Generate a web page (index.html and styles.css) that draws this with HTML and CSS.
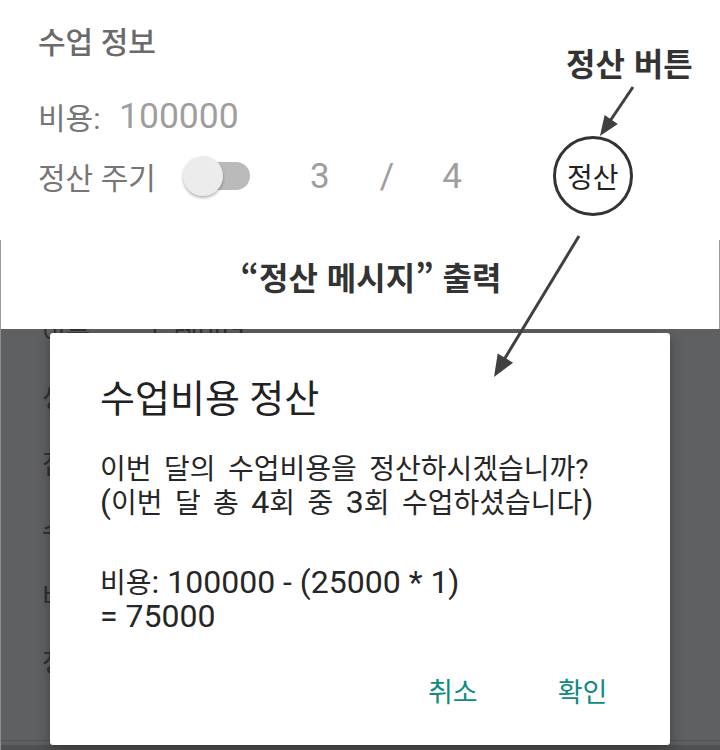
FILE: index.html
```html
<!DOCTYPE html>
<html lang="ko">
<head>
<meta charset="utf-8">
<title>수업 정산</title>
<link rel="stylesheet" href="styles.css">
</head>
<body>
<div class="page">
  <section class="info">
    <h2 class="info-title">수업 정보</h2>
    <div class="row cost-row">
      <span class="label cost-label">비용:</span>
      <span class="value">100000</span>
    </div>
    <div class="row cycle-row">
      <span class="label cycle-label">정산 주기</span>
      <span class="switch"><span class="track"></span><span class="thumb"></span></span>
      <span class="num num-done">3</span>
      <span class="num slash">/</span>
      <span class="num num-total">4</span>
      <button class="settle-btn">정산</button>
    </div>
  </section>

  <div class="band">
    <p class="caption">“정산 메시지” 출력</p>
  </div>

  <div class="dim">
    <ul class="bg-list">
      <li>이름<span class="bg-val">트레이너</span></li>
      <li>생년월일</li>
      <li>집 주소</li>
      <li>수업 정보</li>
      <li>비용</li>
      <li>정산 주기</li>
    </ul>
    <div class="bg-divider"></div>
    <div class="bg-bottom"></div>

    <div class="dialog">
      <h3 class="dialog-title">수업비용 정산</h3>
      <p class="dialog-text">이번 달의 수업비용을 정산하시겠습니까?<br><span class="n">(</span>이번 달 총 <span class="n">4</span>회 중 <span class="n">3</span>회 수업하셨습니다<span class="n">)</span></p>
      <p class="dialog-text calc">비용<span class="n">: 100000 - (25000 * 1)</span><br><span class="n">= 75000</span></p>
      <div class="dialog-actions">
        <button class="action">취소</button>
        <button class="action">확인</button>
      </div>
    </div>
  </div>

  <div class="note">정산 버튼</div>
  <svg class="arrows" width="720" height="750" viewBox="0 0 720 750">
    <line x1="633" y1="87" x2="608" y2="124" stroke="#404040" stroke-width="3"/>
    <polygon points="600,136 617.8,123.9 604.6,114.9" fill="#404040"/>
    <line x1="579" y1="236" x2="502" y2="363" stroke="#404040" stroke-width="3"/>
    <polygon points="494,377 513.1,362.7 497.7,353.5" fill="#404040"/>
  </svg>
</div>
</body>
</html>
```

FILE: styles.css
```css
* { box-sizing: border-box; }

html, body {
  margin: 0;
  padding: 0;
  background: #ffffff;
}

.page {
  position: relative;
  width: 720px;
  height: 750px;
  overflow: hidden;
  font-family: Roboto, "Noto Sans CJK KR", sans-serif;
}

/* ---------- top info section ---------- */
.info {
  height: 240px;
  padding: 23px 0 0 38px;
}

.info-title {
  margin: 0;
  font-size: 30px;
  font-weight: 500;
  line-height: 40px;
  color: #6a6a6a;
}

.row {
  display: flex;
  align-items: center;
}

.cost-row {
  margin-top: 33px;
  height: 40px;
}

.label {
  font-size: 30px;
  color: #767676;
}

.cost-label { width: 81px; }
.cycle-label { width: 145px; }

.value {
  font-size: 35.5px;
  color: #9e9e9e;
}

.cycle-row {
  margin-top: 0;
  height: 80px;
}

.switch {
  position: relative;
  display: block;
  width: 68px;
  height: 40px;
}

.track {
  position: absolute;
  left: 17px;
  top: 6px;
  width: 50px;
  height: 28px;
  border-radius: 14px;
  background: #bababa;
}

.thumb {
  position: absolute;
  left: 0;
  top: 0;
  width: 40px;
  height: 40px;
  border-radius: 50%;
  background: #ececec;
  box-shadow: 0 2px 3px rgba(0, 0, 0, 0.28);
}

.num {
  font-size: 35px;
  color: #9e9e9e;
}

.num-done { margin-left: 59px; }
.slash { margin-left: 50px; }
.num-total { margin-left: 48px; }

.settle-btn {
  margin-left: 91px;
  width: 80px;
  height: 80px;
  padding: 0;
  border: 3px solid #333333;
  border-radius: 50%;
  background: #ffffff;
  font-family: "Noto Sans CJK KR", sans-serif;
  font-size: 28px;
  color: #222222;
}

/* ---------- annotation band ---------- */
.band {
  height: 89px;
  border-left: 1px solid #9a9a9a;
  border-right: 1px solid #9a9a9a;
  padding: 14px 0 0 22px;
  text-align: center;
}

.caption {
  margin: 0;
  font-family: "Noto Sans CJK KR", sans-serif;
  font-size: 32px;
  font-weight: 700;
  color: #333333;
  line-height: 44px;
}

.note {
  position: absolute;
  left: 566px;
  top: 40px;
  font-family: "Noto Sans CJK KR", sans-serif;
  font-size: 32px;
  font-weight: 700;
  line-height: 44px;
  color: #333333;
}

.arrows {
  position: absolute;
  left: 0;
  top: 0;
  pointer-events: none;
}

/* ---------- dimmed screen ---------- */
.dim {
  position: relative;
  height: 421px;
  overflow: hidden;
  background: #5f6062;
  border-left: 1px solid #8c8c8c;
}

.bg-list {
  list-style: none;
  margin: -14px 0 0;
  padding: 0 0 0 41px;
  display: flex;
  flex-direction: column;
  gap: 30px;
}

.bg-list li {
  font-size: 26px;
  line-height: 36px;
  color: #2e2f30;
}

.bg-val {
  margin-left: 60px;
}

.bg-divider {
  position: absolute;
  left: 0;
  right: 0;
  top: 411px;
  height: 1px;
  background: #525355;
}

.bg-bottom {
  position: absolute;
  left: 0;
  right: 0;
  bottom: 0;
  height: 5px;
  background: #4f5052;
}

.dialog {
  position: absolute;
  left: 49px;
  top: 4px;
  width: 620px;
  height: 412px;
  background: #ffffff;
  border-radius: 3px;
  box-shadow: 0 4px 14px rgba(0, 0, 0, 0.35);
  padding: 42px 0 0 50px;
}

.dialog-title {
  margin: 0;
  font-size: 38px;
  font-weight: 400;
  line-height: 48px;
  color: #212121;
}

.dialog-text {
  margin: 30px 0 0;
  font-size: 28px;
  line-height: 33px;
  word-spacing: 5.5px;
  color: #262626;
}

.dialog-text .n {
  font-size: 32px;
  word-spacing: 0;
}

.dialog-text.calc {
  margin-top: 46px;
}

.dialog-actions {
  display: flex;
  gap: 80px;
  margin: 37px 0 0 328px;
}

.action {
  padding: 0;
  border: 0;
  background: none;
  font-family: Roboto, "Noto Sans CJK KR", sans-serif;
  font-size: 27px;
  font-weight: 400;
  color: #0f8a7e;
}
```
